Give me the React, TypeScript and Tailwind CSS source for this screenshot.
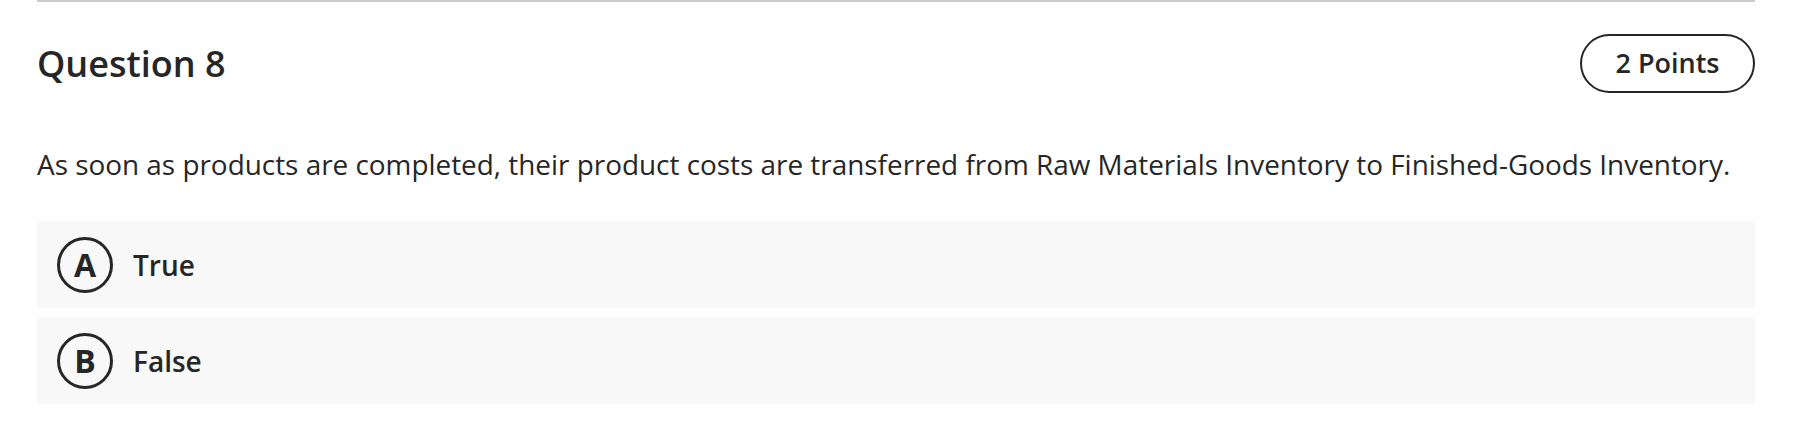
export default function App() {
  const options = [
    { letter: "A", label: "True" },
    { letter: "B", label: "False" },
  ];

  return (
    <div className="min-h-[431px] bg-white text-[#262626]" style={{ fontFamily: '"Open Sans", "Liberation Sans", sans-serif' }}>
      <div className="ml-[37px] w-[1718px] border-t-2 border-[#cccccc]">
        <div className="mt-[32px] flex items-center justify-between">
          <h2 className="text-[36px] font-semibold leading-[59px]">Question 8</h2>
          <div className="flex h-[59px] w-[175px] items-center justify-center rounded-full border-2 border-[#262626] text-[27px] font-semibold">
            2 Points
          </div>
        </div>

        <p className="mt-[53px] text-[27.9px] leading-[36px]">
          As soon as products are completed, their product costs are transferred from Raw Materials Inventory to Finished-Goods Inventory.
        </p>

        <div className="mt-[39px] flex flex-col gap-[9px]">
          {options.map((opt) => (
            <div key={opt.letter} className="flex h-[87px] items-center gap-[20px] rounded-[4px] bg-[#f8f8f8] px-[20px]">
              <div className="flex h-[56px] w-[56px] items-center justify-center rounded-full border-[3.5px] border-[#262626] text-[32px] font-bold leading-none">
                {opt.letter}
              </div>
              <span className="text-[28px] font-semibold">{opt.label}</span>
            </div>
          ))}
        </div>
      </div>
    </div>
  );
}
